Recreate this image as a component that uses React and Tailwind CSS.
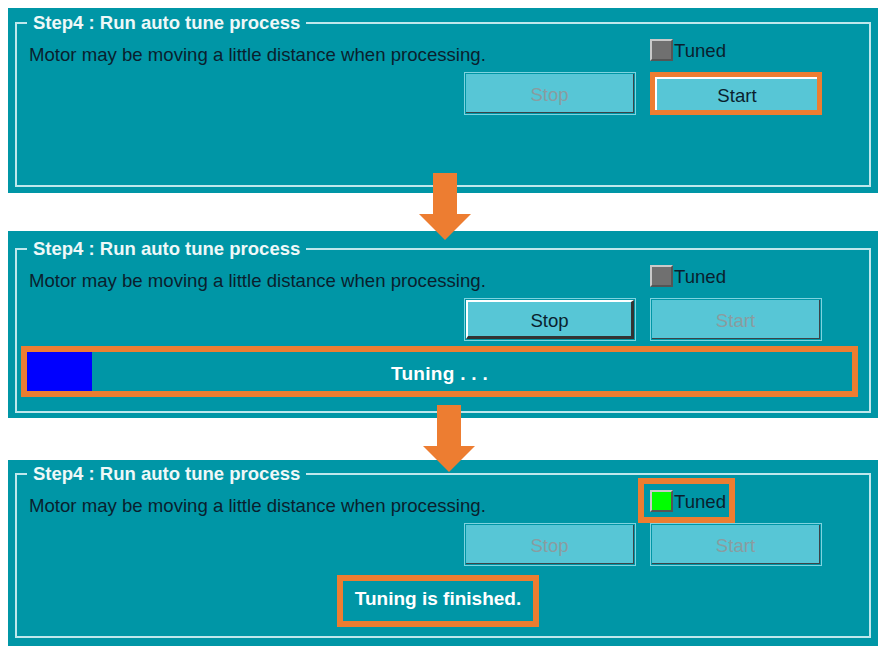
import React from "react";

const ORANGE = "#ed7d31";

const Button = ({ label, state }) => {
  // state: "disabled" | "enabled" | "marked"
  if (state === "marked") {
    return (
      <div className="w-[172px] h-[43px] border-[5px] border-[#ed7d31] bg-[#57c6d6]">
        <div className="h-full pt-[3px] border-t-2 border-l-2 border-white flex items-center justify-center text-[#0a1f2e]">
          {label}
        </div>
      </div>
    );
  }
  if (state === "enabled") {
    return (
      <div className="w-[172px] h-[43px] border border-[#7ed3df] p-[1px]">
        <div className="h-full pt-[3px] bg-[#57c6d6] border-t-2 border-l-2 border-t-white border-l-white border-r-[3px] border-b-[3px] border-r-[#333] border-b-[#333] flex items-center justify-center text-[#0a1f2e]">
          {label}
        </div>
      </div>
    );
  }
  return (
    <div className="w-[172px] h-[43px] border border-[#7ed3df] p-[1px]">
      <div className="h-full pt-[4px] bg-[#57c6d6] border-r border-b border-[#3c4448] flex items-center justify-center text-[#8a9ca0]">
        {label}
      </div>
    </div>
  );
};

const Tuned = ({ done, marked }) => (
  <div
    className={`flex items-center mt-[-6px] ml-[-12px] border-[6px] pl-[6px] pt-[6px] pb-[5px] pr-[3px] ${
      marked ? "border-[#ed7d31]" : "border-transparent"
    }`}
  >
    <div
      className={`w-[23px] h-[22px] border-2 border-t-[#c9c9c9] border-l-[#c9c9c9] border-b-[#555] border-r-[#555] ${
        done ? "bg-[#00ff00]" : "bg-[#707070]"
      }`}
    />
    <span className="ml-[1px] pt-[2px] leading-[22px] text-[#0a1f2e]">Tuned</span>
  </div>
);

const Panel = ({ className, stop, start, done, markTuned, children }) => (
  <div className={`ml-[8px] w-[870px] bg-[#0096a6] ${className}`}>
    <fieldset className="ml-[7px] mr-[7px] border-2 border-[#bfe7ec]">
      <legend className="ml-[10px] px-[6px] text-[18.5px] leading-[20px] font-bold text-[#eef8f8]">
        Step4 : Run auto tune process
      </legend>
      <div className="h-[152px] flex flex-col">
        <div className="flex h-[39px] shrink-0">
          <p className="w-[633px] shrink-0 pl-[12px] pt-[11px] leading-[22px] text-[#0a1f2e]">
            Motor may be moving a little distance when processing.
          </p>
          <Tuned done={done} marked={markTuned} />
        </div>
        <div className="flex pl-[447px] gap-[14px]">
          <Button label="Stop" state={stop} />
          <Button label="Start" state={start} />
        </div>
        {children}
      </div>
    </fieldset>
  </div>
);

const Arrow = ({ className }) => (
  <svg
    className={`absolute ${className}`}
    width="52"
    height="67"
    viewBox="0 0 52 67"
  >
    <polygon points="14,0 38,0 38,41 52,41 26,67 0,41 14,41" fill={ORANGE} />
  </svg>
);

export default function App() {
  return (
    <div className="relative w-[878px] h-[646px] bg-white overflow-hidden font-['Liberation_Sans',Arial,sans-serif] text-[18.6px]">
      <div className="pt-[8px]">
        <Panel className="pt-[5px] pb-[6px]" stop="disabled" start="marked" />
        <Panel className="mt-[38px] pt-[8px] pb-[5px]" stop="enabled" start="disabled">
          <div className="mt-[5px] ml-[4px] w-[837px] h-[51px] border-[6px] border-[#ed7d31] grid">
            <div className="col-start-1 row-start-1 w-[65px] h-full bg-[#0000ff]" />
            <div className="col-start-1 row-start-1 place-self-center pt-[5px] text-white font-bold text-[19px] tracking-[0.3px]">
              Tuning . . .
            </div>
          </div>
        </Panel>
        <Panel className="mt-[42px] pt-[4px] pb-[8px]" stop="disabled" start="disabled" done markTuned>
          <div className="mt-[9px] ml-[320px] w-[202px] h-[52px] pb-[4px] border-[6px] border-[#ed7d31] flex items-center justify-center text-white font-bold text-[19px]">
            Tuning is finished.
          </div>
        </Panel>
      </div>
      <Arrow className="left-[419px] top-[173px]" />
      <Arrow className="left-[423px] top-[405px]" />
    </div>
  );
}
